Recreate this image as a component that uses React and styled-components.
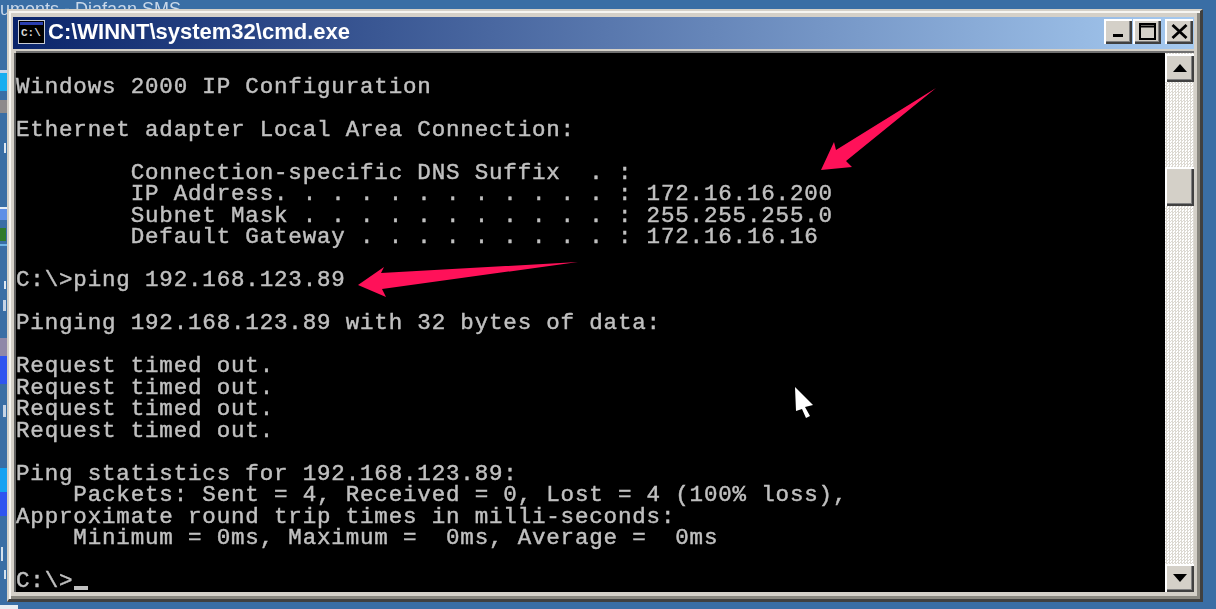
import React from 'react'
import styled, { createGlobalStyle } from 'styled-components'

const GlobalStyle = createGlobalStyle`
  html, body {
    margin: 0;
    padding: 0;
    height: 100%;
    overflow: hidden;
    background: #3a6ea5;
  }
`

const consoleText = `
Windows 2000 IP Configuration

Ethernet adapter Local Area Connection:

        Connection-specific DNS Suffix  . :
        IP Address. . . . . . . . . . . . : 172.16.16.200
        Subnet Mask . . . . . . . . . . . : 255.255.255.0
        Default Gateway . . . . . . . . . : 172.16.16.16

C:\\>ping 192.168.123.89

Pinging 192.168.123.89 with 32 bytes of data:

Request timed out.
Request timed out.
Request timed out.
Request timed out.

Ping statistics for 192.168.123.89:
    Packets: Sent = 4, Received = 0, Lost = 4 (100% loss),
Approximate round trip times in milli-seconds:
    Minimum = 0ms, Maximum =  0ms, Average =  0ms

C:\\>`

// bits of desktop icons that peek out left of the window
const scraps = [
  { top: 70, height: 3, width: 7, color: '#c9d6ea' },
  { top: 73, height: 18, width: 7, color: '#18aef0' },
  { top: 100, height: 13, width: 7, color: '#8d8a8c' },
  { top: 143, height: 10, width: 2, left: 4, color: '#dfe8f2' },
  { top: 207, height: 2, width: 7, color: '#e6eef8' },
  { top: 209, height: 11, width: 7, color: '#5f8fe6' },
  { top: 228, height: 13, width: 6, color: '#2f7a2a' },
  { top: 244, height: 2, width: 7, color: '#6fb4e6' },
  { top: 281, height: 8, width: 2, left: 4, color: '#dfe8f2' },
  { top: 300, height: 11, width: 3, left: 3, color: '#c6d4e6' },
  { top: 338, height: 18, width: 7, color: '#8f88a8' },
  { top: 356, height: 28, width: 7, color: '#2f55f0' },
  { top: 405, height: 12, width: 3, left: 3, color: '#c6d4e6' },
  { top: 468, height: 24, width: 7, color: '#15a2f2' },
  { top: 492, height: 24, width: 7, color: '#2f55f0' },
  { top: 547, height: 14, width: 2, left: 1, color: '#d6e2ee' },
  { top: 570, height: 9, width: 2, left: 4, color: '#d6e2ee' },
  { top: 605, height: 4, width: 18, color: '#e8edf2' },
]

const Desktop = styled.div`
  position: relative;
  width: 1216px;
  height: 609px;
  box-sizing: border-box;
  padding: 9px 13px 7px 7px;
  display: flex;
  overflow: hidden;
  background: #3a6ea5;
`

const DesktopLabel = styled.div`
  position: absolute;
  left: 0;
  top: 0;
  font: 18px 'Liberation Sans', sans-serif;
  line-height: 18px;
  white-space: pre;
  color: #c9d8ea;
  filter: blur(0.6px);
`

const Scrap = styled.div`
  position: absolute;
  top: ${(p) => p.$top}px;
  left: ${(p) => p.$left || 0}px;
  width: ${(p) => p.$width}px;
  height: ${(p) => p.$height}px;
  background: ${(p) => p.$color};
  filter: blur(0.7px);
`

const Window = styled.div`
  position: relative;
  flex: 1;
  display: flex;
  flex-direction: column;
  box-sizing: border-box;
  padding: 6px 6px 7px 4px;
  gap: 4px;
  background: #d4d0c8;
  border-top: 2px solid #d4d0c8;
  border-left: 2px solid #d4d0c8;
  border-right: 3px solid #404040;
  border-bottom: 3px solid #404040;
  box-shadow: inset 2px 2px 0 #f6f5f1, inset -3px -3px 0 #8a8880;
`

const TitleBar = styled.div`
  height: 32px;
  box-sizing: border-box;
  flex: none;
  display: flex;
  align-items: center;
  gap: 3px;
  padding: 0 1px 3px 5px;
  background: linear-gradient(90deg, #0a246a 0%, #a6caf0 100%);
`

const TitleIcon = styled.svg`
  flex: none;
  width: 27px;
  height: 24px;
`

const TitleText = styled.div`
  flex: 1;
  font: bold 22px 'Liberation Sans', sans-serif;
  color: #fff;
  white-space: pre;
  filter: blur(0.4px);
`

const TitleButton = styled.div`
  width: 28px;
  height: 25px;
  margin-left: ${(p) => p.$gap || 0}px;
  display: flex;
  align-items: center;
  justify-content: center;
  background: #d4d0c8;
  box-shadow: inset 2px 2px 0 #fff, inset -2px -2px 0 #404040, inset -3px -3px 0 #808080;
  svg {
    display: block;
  }
`

const Body = styled.div`
  flex: 1;
  min-height: 0;
  margin-left: 3px;
  display: flex;
  box-shadow: 0 -2px 0 #707070, -2px 0 0 #606060;
`

const Console = styled.pre`
  flex: 1;
  margin: 0;
  padding: 2px 0 0 0;
  background: #000;
  color: #c0c0c0;
  font-family: 'Liberation Mono', monospace;
  font-size: 22.5px;
  letter-spacing: 0.83px;
  line-height: 21.5px;
  -webkit-text-stroke: 0.45px #c0c0c0;
  filter: blur(0.4px);
`

const Caret = styled.span`
  display: inline-block;
  width: 14px;
  height: 4px;
  margin-left: 1px;
  background: #c0c0c0;
  vertical-align: -3px;
`

const ScrollBar = styled.div`
  width: 29px;
  flex: none;
  box-sizing: border-box;
  padding-top: 1px;
  display: flex;
  flex-direction: column;
  background-color: #ece9e2;
  background-image: conic-gradient(#dcd9d2 25%, #fff 0 50%, #dcd9d2 0 75%, #fff 0);
  background-size: 3px 3px;
`

const ScrollButton = styled.div`
  height: ${(p) => p.$height}px;
  margin-top: ${(p) => p.$gap || 0}px;
  flex: none;
  display: flex;
  align-items: center;
  justify-content: center;
  background: #d4d0c8;
  box-shadow: inset 2px 2px 0 #fff, inset -2px -2px 0 #404040, inset -3px -3px 0 #808080;
`

const Overlay = styled.svg`
  position: absolute;
  left: 0;
  top: 0;
  pointer-events: none;
`

function CmdIcon() {
  return (
    <TitleIcon viewBox="0 0 27 24">
      <rect x="0.5" y="0.5" width="26" height="23" fill="#000" stroke="#c8ccd4" />
      <rect x="2" y="2" width="23" height="3" fill="#2b3fb0" />
      <text x="3" y="16" fontFamily="Liberation Mono, monospace" fontSize="11" fontWeight="bold" fill="#d8d8d8">C:\</text>
    </TitleIcon>
  )
}

function App() {
  return (
    <Desktop>
      <GlobalStyle />
      <DesktopLabel>{'uments - Diafaan SMS'}</DesktopLabel>
      {scraps.map((s) => (
        <Scrap key={s.top} $top={s.top} $left={s.left} $width={s.width} $height={s.height} $color={s.color} />
      ))}
      <Window>
        <TitleBar>
          <CmdIcon />
          <TitleText>C:\WINNT\system32\cmd.exe</TitleText>
          <TitleButton>
            <svg width="13" height="13" viewBox="0 0 13 13"><rect x="1" y="9" width="10" height="3" fill="#000" /></svg>
          </TitleButton>
          <TitleButton $gap={-2}>
            <svg width="17" height="17" viewBox="0 0 17 17"><path d="M1 1h15v15H1z M1 3.5h15" fill="none" stroke="#000" strokeWidth="2" /></svg>
          </TitleButton>
          <TitleButton $gap={1}>
            <svg width="17" height="15" viewBox="0 0 17 15"><path d="M1.5 1l14 13M15.5 1l-14 13" stroke="#000" strokeWidth="2.8" /></svg>
          </TitleButton>
        </TitleBar>
        <Body>
          <Console>
            {consoleText}
            <Caret />
          </Console>
          <ScrollBar>
            <ScrollButton $height={28}>
              <svg width="14" height="8" viewBox="0 0 14 8"><path d="M7 0l7 8H0z" fill="#000" /></svg>
            </ScrollButton>
            <ScrollButton $height={39} $gap={85} />
            <ScrollButton $height={28} $gap={358}>
              <svg width="14" height="8" viewBox="0 0 14 8"><path d="M0 0h14L7 8z" fill="#000" /></svg>
            </ScrollButton>
          </ScrollBar>
        </Body>
      </Window>
      <Overlay width="1216" height="609" viewBox="0 0 1216 609">
        <path d="M936 88L846 161L852 167L821 170L834 142L836 150Z" fill="#ff1159" />
        <path d="M578 262L382 289L386 297L358 285L384 267L381 273Z" fill="#ff1159" />
        <path d="M795 387L813 405L805 407L810 416L806 418L802 409L796 411Z" fill="#fff" />
      </Overlay>
    </Desktop>
  )
}

export default App
